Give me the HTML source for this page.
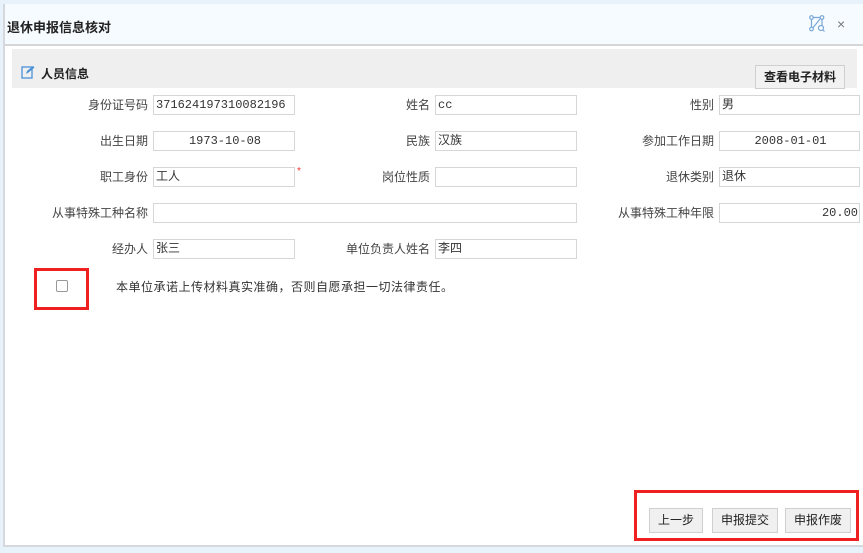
<!DOCTYPE html>
<html><head><meta charset="utf-8"><style>
*{margin:0;padding:0;box-sizing:border-box}
body{width:863px;height:553px;background:#e8f2fb;font-family:"Liberation Sans","Noto Sans CJK SC",sans-serif;font-size:12px;color:#333;position:relative;overflow:hidden}
.dlg{position:absolute;left:3px;top:4px;width:862px;height:543px;background:#fff;border-left:2px solid #d5d8dc;border-bottom:2px solid #d5d8dc}
.title{position:absolute;left:0;top:0;width:100%;height:42px;background:#f6fbff;border-bottom:2px solid #d4d6d8}
.a{position:absolute;white-space:nowrap}
.lbl{position:absolute;text-align:right;white-space:nowrap;line-height:20px;color:#444}
.in{position:absolute;height:20px;border:1px solid #d6d6d6;background:#fff;line-height:18px;padding-left:2px;color:#333;white-space:nowrap;font-family:"Liberation Mono","Noto Sans CJK SC",monospace;font-size:12px}
.btn{position:absolute;height:25px;border:1px solid #cfcfcf;background:#f0f0f0;text-align:center;line-height:23px;color:#222}
.red{position:absolute;border:3px solid #ee2020}
</style></head><body>
<div class="dlg">
 <div class="title"><div class="a" style="left:2px;top:13px;font-weight:bold;font-size:13px;color:#222">退休申报信息核对</div>
 <svg class="a" style="left:804px;top:11px" width="16" height="18" viewBox="0 0 16 18"><g fill="none" stroke="#7aa8d6" stroke-width="1.2"><circle cx="2.5" cy="2.5" r="1.8"/><circle cx="13" cy="2.5" r="1.8"/><circle cx="2.5" cy="14" r="1.8"/><circle cx="12" cy="13" r="2.5"/><path d="M4.3 2.5H11.2M2.5 4.3V12.2M13 4.3V10.5M4 12.8L11 4M14 15l1.5 1.5"/></g></svg>
 <div class="a" style="left:832px;top:12px;font-size:14px;color:#777">×</div></div>
 <div class="a" style="left:7px;top:45px;width:845px;height:39px;background:#efefef"></div>
 <svg class="a" style="left:16px;top:61px" width="14" height="14" viewBox="0 0 14 14"><rect x="1" y="2" width="10" height="11" fill="none" stroke="#4a90d9" stroke-width="1.3"/><path d="M5 9l1-3 6-5 1.5 1.5-6 5z" fill="#4a90d9"/></svg>
 <div class="a" style="left:36px;top:61px;font-weight:bold;color:#222">人员信息</div>
 <div class="btn" style="left:750px;top:61px;width:90px;height:24px;font-weight:bold;background:#f2f2f2">查看电子材料</div>
</div>
<div class="lbl" style="right:715px;top:95px">身份证号码</div><div class="in" style="left:153px;top:95px;width:142px">371624197310082196</div>
<div class="lbl" style="right:433px;top:95px">姓名</div><div class="in" style="left:435px;top:95px;width:142px">cc</div>
<div class="lbl" style="right:149px;top:95px">性别</div><div class="in" style="left:719px;top:95px;width:141px">男</div>
<div class="lbl" style="right:715px;top:131px">出生日期</div><div class="in" style="left:153px;top:131px;width:142px;text-align:center">1973-10-08</div>
<div class="lbl" style="right:433px;top:131px">民族</div><div class="in" style="left:435px;top:131px;width:142px">汉族</div>
<div class="lbl" style="right:149px;top:131px">参加工作日期</div><div class="in" style="left:719px;top:131px;width:141px;text-align:center">2008-01-01</div>
<div class="lbl" style="right:715px;top:167px">职工身份</div><div class="in" style="left:153px;top:167px;width:142px">工人</div><div class="a" style="left:297px;top:166px;color:#e33;font-size:10px">*</div>
<div class="lbl" style="right:433px;top:167px">岗位性质</div><div class="in" style="left:435px;top:167px;width:142px"></div>
<div class="lbl" style="right:149px;top:167px">退休类别</div><div class="in" style="left:719px;top:167px;width:141px">退休</div>
<div class="lbl" style="right:715px;top:203px">从事特殊工种名称</div><div class="in" style="left:153px;top:203px;width:424px"></div>
<div class="lbl" style="right:149px;top:203px">从事特殊工种年限</div><div class="in" style="left:719px;top:203px;width:141px;text-align:right;padding-right:1px">20.00</div>
<div class="lbl" style="right:715px;top:239px">经办人</div><div class="in" style="left:153px;top:239px;width:142px">张三</div>
<div class="lbl" style="right:433px;top:239px">单位负责人姓名</div><div class="in" style="left:435px;top:239px;width:142px">李四</div>
<div class="red" style="left:34px;top:268px;width:55px;height:42px"></div>
<div class="a" style="left:56px;top:280px;width:12px;height:12px;border:1px solid #999;border-radius:2px"></div>
<div class="a" style="left:116px;top:278px;letter-spacing:0.5px;color:#333">本单位承诺上传材料真实准确，否则自愿承担一切法律责任。</div>
<div class="red" style="left:634px;top:490px;width:225px;height:51px"></div>
<div class="btn" style="left:649px;top:508px;width:54px">上一步</div>
<div class="btn" style="left:712px;top:508px;width:66px">申报提交</div>
<div class="btn" style="left:785px;top:508px;width:66px">申报作废</div>
</body></html>
